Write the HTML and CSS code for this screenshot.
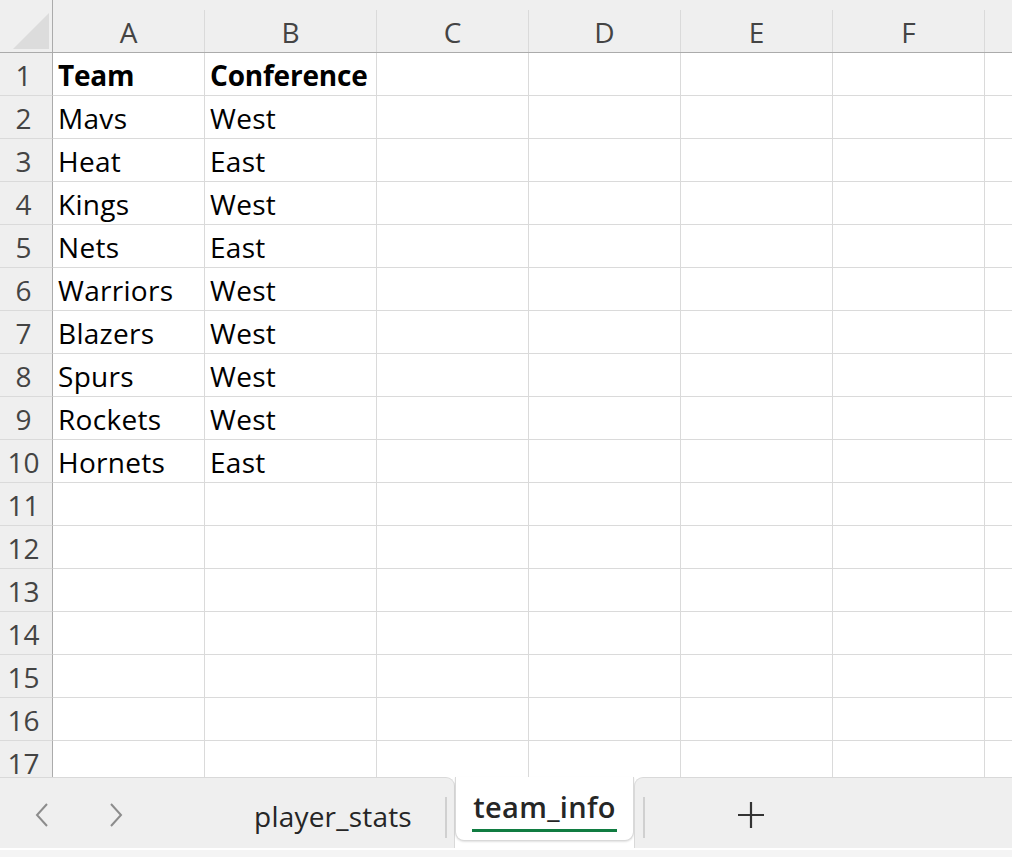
FILE: index.html
```html
<!DOCTYPE html>
<html lang="en">

<head>
    <meta charset="utf-8">
    <meta name="viewport" content="width=device-width, initial-scale=1.0">
    <title>team_info</title>

    <link rel="stylesheet" href="styles.css">
</head>

<body>

    <main class="ark">
        <div class="gitter">
            <div class="hjorne">
                <svg width="36" height="36" viewBox="0 0 36 36"><polygon points="0,36 36,0 36,36" fill="#dcdcdc"/></svg>
            </div>
            <div class="kol">A</div><div class="kol">B</div><div class="kol">C</div><div class="kol">D</div><div class="kol">E</div><div class="kol">F</div><div class="kol"></div>

            <div class="nr">1</div><div class="celle fed">Team</div><div class="celle fed">Conference</div><div class="celle"></div><div class="celle"></div><div class="celle"></div><div class="celle"></div><div class="celle"></div>
            <div class="nr">2</div><div class="celle">Mavs</div><div class="celle">West</div><div class="celle"></div><div class="celle"></div><div class="celle"></div><div class="celle"></div><div class="celle"></div>
            <div class="nr">3</div><div class="celle">Heat</div><div class="celle">East</div><div class="celle"></div><div class="celle"></div><div class="celle"></div><div class="celle"></div><div class="celle"></div>
            <div class="nr">4</div><div class="celle">Kings</div><div class="celle">West</div><div class="celle"></div><div class="celle"></div><div class="celle"></div><div class="celle"></div><div class="celle"></div>
            <div class="nr">5</div><div class="celle">Nets</div><div class="celle">East</div><div class="celle"></div><div class="celle"></div><div class="celle"></div><div class="celle"></div><div class="celle"></div>
            <div class="nr">6</div><div class="celle">Warriors</div><div class="celle">West</div><div class="celle"></div><div class="celle"></div><div class="celle"></div><div class="celle"></div><div class="celle"></div>
            <div class="nr">7</div><div class="celle">Blazers</div><div class="celle">West</div><div class="celle"></div><div class="celle"></div><div class="celle"></div><div class="celle"></div><div class="celle"></div>
            <div class="nr">8</div><div class="celle">Spurs</div><div class="celle">West</div><div class="celle"></div><div class="celle"></div><div class="celle"></div><div class="celle"></div><div class="celle"></div>
            <div class="nr">9</div><div class="celle">Rockets</div><div class="celle">West</div><div class="celle"></div><div class="celle"></div><div class="celle"></div><div class="celle"></div><div class="celle"></div>
            <div class="nr">10</div><div class="celle">Hornets</div><div class="celle">East</div><div class="celle"></div><div class="celle"></div><div class="celle"></div><div class="celle"></div><div class="celle"></div>
            <div class="nr">11</div><div class="celle"></div><div class="celle"></div><div class="celle"></div><div class="celle"></div><div class="celle"></div><div class="celle"></div><div class="celle"></div>
            <div class="nr">12</div><div class="celle"></div><div class="celle"></div><div class="celle"></div><div class="celle"></div><div class="celle"></div><div class="celle"></div><div class="celle"></div>
            <div class="nr">13</div><div class="celle"></div><div class="celle"></div><div class="celle"></div><div class="celle"></div><div class="celle"></div><div class="celle"></div><div class="celle"></div>
            <div class="nr">14</div><div class="celle"></div><div class="celle"></div><div class="celle"></div><div class="celle"></div><div class="celle"></div><div class="celle"></div><div class="celle"></div>
            <div class="nr">15</div><div class="celle"></div><div class="celle"></div><div class="celle"></div><div class="celle"></div><div class="celle"></div><div class="celle"></div><div class="celle"></div>
            <div class="nr">16</div><div class="celle"></div><div class="celle"></div><div class="celle"></div><div class="celle"></div><div class="celle"></div><div class="celle"></div><div class="celle"></div>
            <div class="nr">17</div><div class="celle"></div><div class="celle"></div><div class="celle"></div><div class="celle"></div><div class="celle"></div><div class="celle"></div><div class="celle"></div>
        </div>
    </main>

    <footer class="faner">
        <div class="venstre">
            <nav class="pile">
                <button>
                    <svg width="14" height="24" viewBox="0 0 14 24"><polyline points="12,1 2,12 12,23" fill="none" stroke="#8c8c8c" stroke-width="2"/></svg>
                </button>
                <button>
                    <svg width="14" height="24" viewBox="0 0 14 24"><polyline points="2,1 12,12 2,23" fill="none" stroke="#8c8c8c" stroke-width="2"/></svg>
                </button>
            </nav>
            <div class="fane">player_stats</div>
            <span class="streg"></span>
        </div>
        <div class="fane aktiv"><span>team_info</span></div>
        <div class="hojre">
            <span class="streg"></span>
            <button class="ny">
                <svg width="28" height="28" viewBox="0 0 28 28"><path d="M14 1v26M1 14h26" stroke="#333" stroke-width="2.2"/></svg>
            </button>
        </div>
    </footer>
    <div class="bund"></div>

</body>

</html>
```

FILE: styles.css
```css
body {
    margin: 0;
    padding: 0;
    background-color: white;
    font-family: "Open Sans", "Noto Sans", sans-serif;
    color: black;
    overflow: hidden;
}

/*Regnearket*/

.ark {
    height: 777px;
    overflow: hidden;
}

.gitter {
    display: grid;
    grid-template-columns: 53px 152px 172px 152px 152px 152px 152px 152px;
    grid-template-rows: 53px;
    grid-auto-rows: 43px;
    width: 1137px;
}

.hjorne {
    box-sizing: border-box;
    background-color: #efefef;
    border-right: 1px solid #ababab;
    border-bottom: 1px solid #ababab;
    padding: 13px 0 0 13px;
}

.kol {
    position: relative;
    box-sizing: border-box;
    background-color: #efefef;
    border-bottom: 1px solid #ababab;
    color: #444;
    font-size: 28px;
    line-height: 30px;
    text-align: center;
    padding: 17px 1px 0 0;
}

.kol::after {
    content: "";
    position: absolute;
    right: 0;
    top: 10px;
    bottom: 0;
    width: 1px;
    background-color: #dadada;
}

.nr {
    box-sizing: border-box;
    background-color: #efefef;
    border-right: 1px solid #ababab;
    border-bottom: 1px solid #dadada;
    color: #444;
    font-size: 28px;
    line-height: 30px;
    text-align: center;
    padding: 7px 5px 0 0;
}

.celle {
    box-sizing: border-box;
    border-right: 1px solid #dadada;
    border-bottom: 1px solid #dadada;
    font-size: 28px;
    line-height: 30px;
    letter-spacing: 0.3px;
    padding: 7px 0 0 5px;
    white-space: nowrap;
}

.fed {
    font-weight: bold;
    letter-spacing: -0.2px;
}

/*Fanerne*/

.faner {
    display: flex;
    height: 71px;
    background-color: white;
}

.venstre,
.hojre {
    display: flex;
    align-items: center;
    box-sizing: border-box;
    background-color: #efefef;
    border-top: 1px solid #d9d9d9;
}

.venstre {
    width: 455px;
    border-top-right-radius: 9px;
    border-right: 1px solid #d9d9d9;
}

.hojre {
    flex: 1;
    border-top-left-radius: 9px;
    border-left: 1px solid #d9d9d9;
    padding-left: 8px;
}

.pile {
    display: flex;
    width: 221px;
    box-sizing: border-box;
    padding: 4px 0 0 29px;
    gap: 48px;
}

.pile button,
.ny {
    border: none;
    background: none;
    padding: 0;
    width: 26px;
    height: 30px;
    display: flex;
    align-items: center;
    justify-content: center;
}

.fane {
    width: 224px;
    text-align: center;
    font-size: 28px;
    letter-spacing: 0.2px;
    color: #262626;
    padding-top: 6px;
}

.streg {
    width: 2px;
    height: 41px;
    background-color: #d0d0d0;
    margin-top: 8px;
}

.aktiv {
    box-sizing: border-box;
    width: 179px;
    height: 64px;
    background-color: white;
    border: 1px solid #d9d9d9;
    border-top: none;
    border-radius: 0 0 9px 9px;
    box-shadow: 0 1px 2px rgba(0, 0, 0, 0.12);
    padding-top: 8px;
    font-size: 29px;
    font-weight: 600;
    letter-spacing: 0.3px;
    background-clip: padding-box;
}

.aktiv span {
    display: inline-block;
    line-height: 44px;
    border-bottom: 3px solid #107c41;
    padding: 0 1px;
}

.ny {
    width: 30px;
    height: 30px;
    margin-left: 91px;
    margin-top: 4px;
}

.bund {
    height: 7px;
    margin-top: 2px;
    background-color: #f4f4f4;
}
```
